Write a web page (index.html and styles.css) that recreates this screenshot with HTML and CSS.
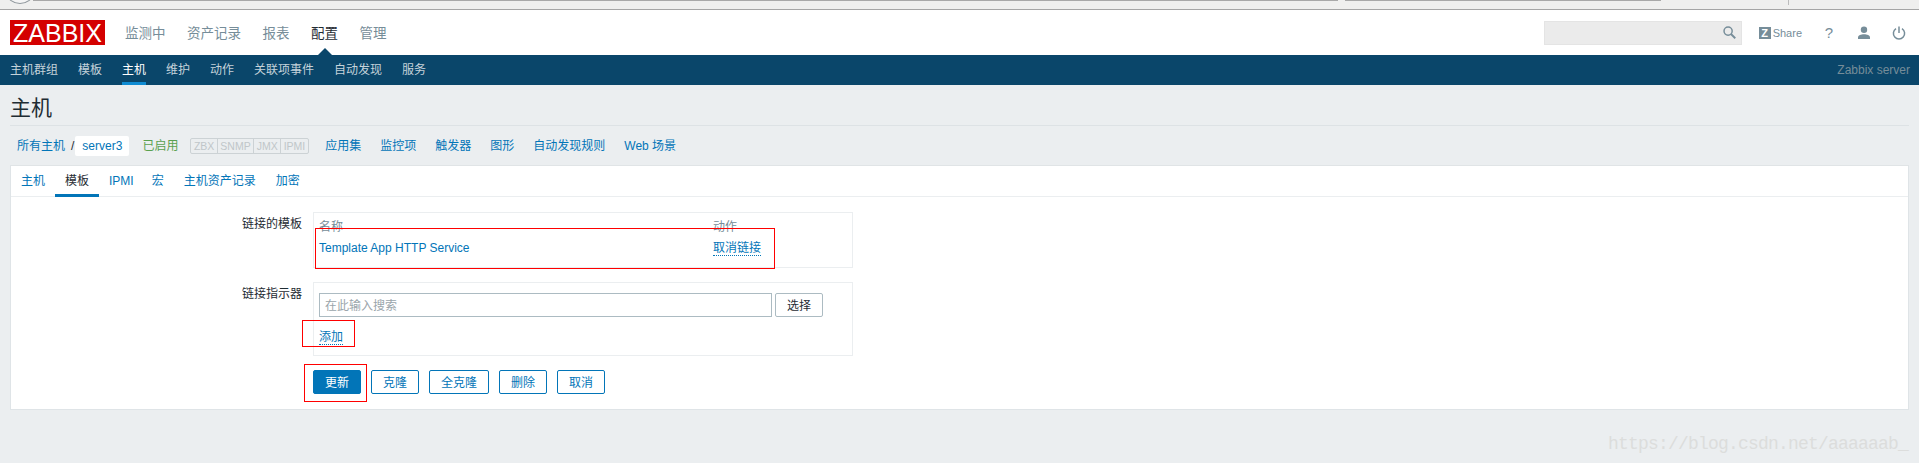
FILE: index.html
```html
<!DOCTYPE html>
<html lang="zh-CN">
<head>
  <meta charset="UTF-8" />
  <meta name="viewport" content="width=device-width, initial-scale=1.0" />
  <title>配置主机</title>
  <link rel="stylesheet" href="styles.css">
</head>
<body>

  <div class="browser-strip">
    <span class="browser-circle"></span>
    <span class="browser-url"></span>
    <span class="browser-url-end"></span>
    <span class="browser-tick"></span>
  </div>

  <header class="top-bar">
    <div class="logo">ZABBIX</div>
    <nav class="main-nav">
      <a href="#">监测中</a>
      <a href="#">资产记录</a>
      <a href="#">报表</a>
      <a href="#" class="current">配置</a>
      <a href="#">管理</a>
    </nav>
    <div class="top-tools">
      <div class="search-box">
        <svg class="search-icon" width="13" height="13" viewBox="0 0 14 14">
          <circle cx="5.5" cy="5.5" r="4.4" fill="none" stroke="#768d99" stroke-width="1.6"/>
          <path d="M8.6 8.6L13.2 13.2" stroke="#768d99" stroke-width="2"/>
        </svg>
      </div>
      <a href="#" class="share">
        <span class="share-badge">Z</span>Share
      </a>
      <span class="tool help">?</span>
      <svg class="tool" width="14" height="14" viewBox="0 0 14 14">
        <circle cx="7" cy="3.8" r="3.2" fill="#768d99"/>
        <path d="M1 13v-1.5C1 9.5 4 8.3 7 8.3s6 1.2 6 3.2V13z" fill="#768d99"/>
      </svg>
      <svg class="tool" width="14" height="14" viewBox="0 0 14 14">
        <path d="M4 2.6a5.6 5.6 0 1 0 6 0" fill="none" stroke="#768d99" stroke-width="1.5"/>
        <path d="M7 0.5v6.5" stroke="#768d99" stroke-width="1.5"/>
      </svg>
    </div>
  </header>

  <nav class="sub-nav">
    <a href="#">主机群组</a>
    <a href="#">模板</a>
    <a href="#" class="current">主机</a>
    <a href="#">维护</a>
    <a href="#">动作</a>
    <a href="#">关联项事件</a>
    <a href="#">自动发现</a>
    <a href="#">服务</a>
    <span class="server-name">Zabbix server</span>
  </nav>

  <main class="content">
    <h1>主机</h1>

    <div class="host-row">
      <a href="#">所有主机</a>
      <span class="slash">/</span>
      <a href="#" class="host-name">server3</a>
      <span class="enabled">已启用</span>
      <div class="status-tags">
        <span>ZBX</span><span>SNMP</span><span>JMX</span><span>IPMI</span>
      </div>
      <a href="#" class="host-link">应用集</a>
      <a href="#" class="host-link">监控项</a>
      <a href="#" class="host-link">触发器</a>
      <a href="#" class="host-link">图形</a>
      <a href="#" class="host-link">自动发现规则</a>
      <a href="#" class="host-link">Web 场景</a>
    </div>

    <section class="panel">
      <div class="tabs">
        <a href="#">主机</a>
        <a href="#" class="current">模板</a>
        <a href="#" class="tab-ipmi">IPMI</a>
        <a href="#">宏</a>
        <a href="#">主机资产记录</a>
        <a href="#">加密</a>
      </div>

      <div class="form">
        <div class="form-row">
          <label>链接的模板</label>
          <div class="form-box linked">
            <div class="linked-head"><span>名称</span><span>动作</span></div>
            <div class="linked-row">
              <a href="#">Template App HTTP Service</a>
              <a href="#" class="dotted">取消链接</a>
            </div>
          </div>
        </div>

        <div class="form-row">
          <label>链接指示器</label>
          <div class="form-box indicator">
            <div class="search-row">
              <input type="text" placeholder="在此输入搜索">
              <button class="select-btn">选择</button>
            </div>
            <a href="#" class="dotted">添加</a>
          </div>
        </div>

        <div class="form-buttons">
          <button class="btn primary">更新</button>
          <button class="btn">克隆</button>
          <button class="btn wide">全克隆</button>
          <button class="btn">删除</button>
          <button class="btn">取消</button>
        </div>
      </div>
    </section>
  </main>

  <!-- red boxes somebody drew on the screenshot -->
  <div class="mark mark-template"></div>
  <div class="mark mark-add"></div>
  <div class="mark mark-update"></div>

  <div class="watermark">https://blog.csdn.net/aaaaaab_</div>

</body>
</html>
```

FILE: styles.css
```css
* {
  box-sizing: border-box;
}

html, body {
  height: 100%;
}

body {
  margin: 0;
  position: relative;
  overflow: hidden;
  background-color: #ebeef0;
  color: #1f2c33;
  font-family: "Liberation Sans", "Noto Sans CJK SC", sans-serif;
  font-size: 12px;
  line-height: 14px;
}

a {
  color: #0275b8;
  text-decoration: none;
}

/* strip of the browser window above the page */
.browser-strip {
  position: relative;
  height: 10px;
  background-color: #efefee;
  border-bottom: 1px solid #a5a5a5;
}

.browser-circle {
  position: absolute;
  left: 7px;
  top: -16px;
  width: 26px;
  height: 20px;
  border: 1px solid #8f979c;
  border-radius: 50%;
  background-color: #f4f4f4;
}

.browser-url {
  position: absolute;
  left: 33px;
  width: 1305px;
  top: 0;
  height: 1px;
  background-color: #a8a8a8;
}

.browser-url-end {
  position: absolute;
  left: 1345px;
  width: 316px;
  top: 0;
  height: 1px;
  background-color: #a8a8a8;
}

.browser-tick {
  position: absolute;
  left: 1788px;
  top: 0;
  width: 1px;
  height: 5px;
  background-color: #bbb;
}

.top-bar {
  display: flex;
  align-items: center;
  height: 45px;
  background-color: #fff;
  padding: 0 13px 0 10px;
}

.logo {
  width: 95px;
  height: 25px;
  background-color: #d40000;
  color: #fff;
  font-size: 25px;
  line-height: 26px;
  text-align: center;
}

.main-nav {
  display: flex;
  gap: 21.5px;
  margin-left: 20px;
  padding-top: 2px;
  font-size: 13.5px;
}

.main-nav a {
  color: #768d99;
  position: relative;
}

.main-nav a.current {
  color: #1f2c33;
}

.main-nav a.current::after {
  content: "";
  position: absolute;
  left: 7px;
  bottom: -14px;
  border-left: 7px solid transparent;
  border-right: 7px solid transparent;
  border-bottom: 7px solid #0a466a;
}

.top-tools {
  display: flex;
  align-items: center;
  margin-left: auto;
}

.search-box {
  display: flex;
  align-items: center;
  justify-content: flex-end;
  width: 198px;
  height: 24px;
  padding-right: 5px;
  background-color: #ebebeb;
  border: 1px solid #e4e4e4;
}

.share {
  display: flex;
  align-items: center;
  margin-left: 17px;
  color: #768d99;
  font-size: 11px;
}

.share-badge {
  width: 12px;
  height: 12px;
  margin-right: 2px;
  background-color: #768d99;
  color: #fff;
  font-size: 11px;
  font-weight: bold;
  line-height: 12px;
  text-align: center;
}

.tool {
  margin-left: 21px;
}

.help {
  width: 14px;
  margin-left: 20px;
  color: #768d99;
  font-size: 15px;
  text-align: center;
}

.sub-nav {
  display: flex;
  align-items: center;
  gap: 20px;
  height: 30px;
  padding: 0 9px 0 10px;
  background-color: #0a466a;
}

.sub-nav a {
  display: block;
  height: 30px;
  padding-top: 8px;
  color: #c5d3da;
}

.sub-nav a.current {
  color: #fff;
  border-bottom: 3px solid #0f8bd2;
}

.server-name {
  margin-left: auto;
  color: #768d99;
}

.content {
  padding: 0 10px;
}

h1 {
  margin: 0;
  height: 41px;
  padding-top: 10px;
  border-bottom: 1px solid #dde2e5;
  font-size: 21px;
  font-weight: normal;
  line-height: 26px;
}

.host-row {
  display: flex;
  align-items: center;
  height: 39px;
  padding-left: 7px;
}

.slash {
  margin: 0 1px 0 6px;
  color: #1f2c33;
}

.host-name {
  padding: 3px 7px;
  height: 20px;
  background-color: #fff;
  border-radius: 2px;
}

.enabled {
  margin-left: 13px;
  color: #59a14f;
}

.status-tags {
  display: flex;
  margin-left: 12px;
  border: 1px solid #ccd2d5;
  border-radius: 2px;
}

.status-tags span {
  padding: 0 2.5px;
  height: 14px;
  color: #c0c6c9;
  font-size: 10.5px;
  border-right: 1px solid #ccd2d5;
}

.status-tags span:last-child {
  border-right: 0;
}

.host-link {
  margin-left: 19px;
}

.status-tags + .host-link {
  margin-left: 16.5px;
}

.panel {
  height: 245px;
  background-color: #fff;
  border: 1px solid #dfe4e7;
  border-top: 1px solid #e0e4e6;
}

.tabs {
  display: flex;
  height: 31px;
  border-bottom: 1px solid #ebeef0;
}

.tabs a {
  display: block;
  height: 31px;
  padding: 8px 10px 0;
}

.tabs a.tab-ipmi {
  padding-right: 8px;
}

.tabs a.current {
  color: #1f2c33;
  border-bottom: 3px solid #0275b8;
}

.form {
  padding-top: 15px;
}

.form-row {
  display: flex;
  margin-bottom: 14px;
}

.form-row label {
  width: 302px;
  padding: 5px 11px 0 0;
  text-align: right;
}

.form-box {
  width: 540px;
  border: 1px solid #ebeef0;
  padding: 5px;
}

.linked {
  height: 56px;
  padding-top: 7px;
}

.linked-head {
  display: flex;
  color: #768d99;
}

.linked-row {
  display: flex;
  padding-top: 7px;
}

.linked-head span:first-child,
.linked-row a:first-child {
  width: 394px;
}

.dotted {
  border-bottom: 1px dotted #0275b8;
}

.indicator {
  height: 74px;
  padding-top: 10px;
}

.search-row {
  display: flex;
  gap: 3px;
  margin-bottom: 13px;
}

.search-row input {
  width: 453px;
  height: 24px;
  padding: 2px 5px 0;
  border: 1px solid #acbbc2;
  border-radius: 0;
  font: inherit;
}

.search-row input::placeholder {
  color: #9aa5ab;
}

.select-btn {
  width: 48px;
  height: 24px;
  padding: 2px 0 0;
  background-color: #fff;
  border: 1px solid #acbbc2;
  border-radius: 2px;
  color: #1f2c33;
  font: inherit;
}

.form-buttons {
  display: flex;
  gap: 10px;
  margin-left: 302px;
}

.btn {
  width: 48px;
  height: 24px;
  padding: 2px 0 0;
  background-color: #fff;
  border: 1px solid #0275b8;
  border-radius: 2px;
  color: #0275b8;
  font: inherit;
}

.btn.wide {
  width: 60px;
}

.btn.primary {
  background-color: #0275b8;
  color: #fff;
}

.mark {
  position: absolute;
  border: 1px solid #f00;
}

.mark-template {
  left: 315px;
  top: 228px;
  width: 460px;
  height: 41px;
}

.mark-add {
  left: 302px;
  top: 320px;
  width: 53px;
  height: 27px;
}

.mark-update {
  left: 304px;
  top: 364px;
  width: 63px;
  height: 38px;
}

.watermark {
  position: absolute;
  left: 1608px;
  top: 434px;
  color: #dcdddc;
  font-family: "Liberation Mono", monospace;
  font-size: 18px;
  line-height: 20px;
  letter-spacing: -0.8px;
}
```
